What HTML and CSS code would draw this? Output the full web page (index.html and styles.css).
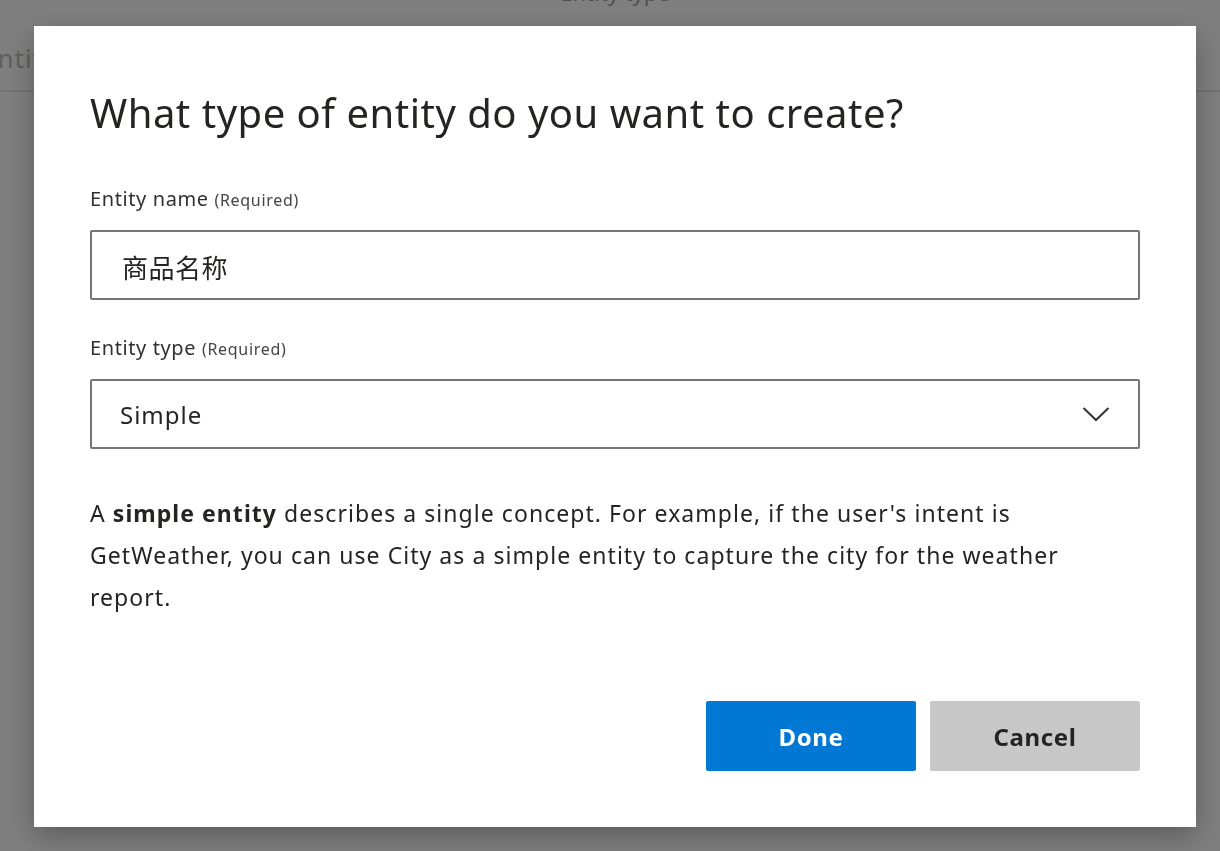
FILE: index.html
```html
<!DOCTYPE html>
<html lang="en">
<head>
<meta charset="utf-8">
<title>Create entity</title>
<link rel="stylesheet" href="styles.css">
</head>
<body>
<div class="page">
  <header class="page-header">
    <div class="page-title">Entity type</div>
  </header>
  <div class="page-tabs">
    <span class="tab">Entities</span>
  </div>
</div>
<div class="overlay">
  <div class="dialog" role="dialog">
    <h1 class="dialog-title">What type of entity do you want to create?</h1>
    <div class="field">
      <label class="label">Entity name <span class="req">(Required)</span></label>
      <div class="input cjk">商品名称</div>
    </div>
    <div class="field">
      <label class="label">Entity type <span class="req">(Required)</span></label>
      <div class="input select">
        <span>Simple</span>
        <svg class="chev" width="28" height="16" viewBox="0 0 28 16"><path d="M1.5 2 L14 14 L26.5 2" fill="none" stroke="#333" stroke-width="2"/></svg>
      </div>
    </div>
    <p class="desc">A <b>simple entity</b> describes a single concept. For example, if the user's intent is GetWeather, you can use City as a simple entity to capture the city for the weather report.</p>
    <div class="actions">
      <button class="btn primary">Done</button>
      <button class="btn secondary">Cancel</button>
    </div>
  </div>
</div>
</body>
</html>
```

FILE: styles.css
```css
* { box-sizing: border-box; }
html, body { margin: 0; padding: 0; }
body {
  width: 1220px;
  height: 851px;
  overflow: hidden;
  font-family: "Noto Sans", "Noto Sans CJK SC", sans-serif;
  background: #ffffff;
  color: #323130;
}
.page { height: 851px; }
.page-header {
  height: 26px;
  display: flex;
  justify-content: center;
}
.page-title {
  font-size: 22px;
  line-height: 1;
  margin-top: -19px;
  padding-left: 10px;
  color: #a0a0a0;
}
.page-tabs {
  height: 66px;
  border-bottom: 2px solid #e6e6e6;
  display: flex;
  align-items: center;
}
.tab {
  font-size: 26px;
  color: #c0c0c0;
  margin-left: -18px;
  letter-spacing: 1px;
}
.overlay {
  position: fixed;
  inset: 0;
  background: rgba(0, 0, 0, 0.5);
  padding: 26px 24px 24px 34px;
  display: flex;
  align-items: flex-start;
}
.dialog {
  width: 1162px;
  height: 801px;
  background: #ffffff;
  box-shadow: 0 10px 28px rgba(0, 0, 0, 0.28);
  padding: 73px 56px 56px 56px;
  display: flex;
  flex-direction: column;
}
.dialog-title {
  margin: 0;
  font-weight: 400;
  font-size: 40px;
  line-height: 40px;
  letter-spacing: 0.5px;
  color: #252423;
  margin-top: -6px;
  margin-bottom: 52px;
}
.field {
  display: flex;
  flex-direction: column;
}
.label {
  font-size: 20px;
  line-height: 28px;
  letter-spacing: 0.6px;
  color: #323130;
  margin-bottom: 16px;
}
.req { font-size: 16px; color: #444; letter-spacing: 0.7px; }
.input {
  height: 70px;
  border: 2px solid #767676;
  border-radius: 2px;
  padding: 0 28px;
  display: flex;
  align-items: center;
  font-size: 24px;
  letter-spacing: 1px;
  color: #252423;
  margin-bottom: 34px;
}
.cjk { font-size: 26px; padding-left: 30px; padding-top: 3px; letter-spacing: 0.5px; }
.select { justify-content: space-between; padding-right: 28px; margin-bottom: 40px; }
.chev { display: block; }
.desc {
  margin: 0;
  margin-top: 3px;
  font-size: 23px;
  line-height: 42px;
  letter-spacing: 1.05px;
  color: #252423;
}
.desc b { font-weight: 700; }
.actions {
  margin-top: auto;
  display: flex;
  justify-content: flex-end;
  gap: 14px;
}
.btn {
  width: 210px;
  height: 70px;
  border: none;
  border-radius: 2px;
  font-family: inherit;
  font-size: 24px;
  font-weight: 700;
  letter-spacing: 0.6px;
  cursor: pointer;
}
.primary { background: #0078d4; color: #ffffff; }
.secondary { background: #c8c8c8; color: #252423; }
```
